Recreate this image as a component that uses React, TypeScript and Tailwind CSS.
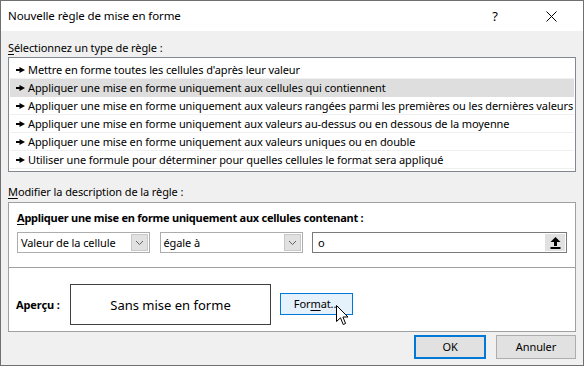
import React from "react";

const Arrow = () => (
  <svg width="9" height="6" viewBox="0 0 9 6" className="shrink-0">
    <rect x="0" y="2" width="5" height="2" fill="#000" />
    <polygon points="3.5,0 9,3 3.5,6" fill="#000" />
  </svg>
);

const Chevron = () => (
  <svg width="9" height="6" viewBox="0 0 9 6">
    <polyline points="1,1 4.5,4.5 8,1" fill="none" stroke="#606060" strokeWidth="1" />
  </svg>
);

const UploadIcon = () => (
  <svg width="11" height="12" viewBox="0 0 11 12">
    <polygon points="5.5,0 10.5,5 0.5,5" fill="#000" />
    <rect x="4" y="4" width="3" height="5" fill="#000" />
    <rect x="0.5" y="10" width="10" height="2" fill="#000" />
  </svg>
);

const Cursor = () => (
  <svg width="13" height="21" viewBox="0 0 13 21">
    <path
      d="M0.5,0.5 L0.5,16.5 L4.5,12.8 L7.2,19.5 L9.6,18.5 L6.9,12 L12,12 Z"
      fill="#fff"
      stroke="#000"
      strokeWidth="1"
      strokeLinejoin="miter"
    />
  </svg>
);

const rules = [
  "Mettre en forme toutes les cellules d'après leur valeur",
  "Appliquer une mise en forme uniquement aux cellules qui contiennent",
  "Appliquer une mise en forme uniquement aux valeurs rangées parmi les premières ou les dernières valeurs",
  "Appliquer une mise en forme uniquement aux valeurs au-dessus ou en dessous de la moyenne",
  "Appliquer une mise en forme uniquement aux valeurs uniques ou en double",
  "Utiliser une formule pour déterminer pour quelles cellules le format sera appliqué",
];

export default function App() {
  return (
    <div className="w-[584px] h-[366px] bg-[#f0f0f0] border border-[#707070] flex flex-col overflow-hidden text-[11px] tracking-[-0.1px] leading-[16px] text-black font-['Noto_Sans',sans-serif]">
      {/* Title bar */}
      <div className="h-[30px] bg-white flex items-center shrink-0">
        <div className="pl-[7px] text-[11.5px] flex-1">Nouvelle règle de mise en forme</div>
        <div className="w-[60px] text-center text-[13px]">?</div>
        <div className="w-[58px] flex justify-center pr-[6px]">
          <svg width="11" height="11" viewBox="0 0 11 11">
            <line x1="0.5" y1="0.5" x2="10.5" y2="10.5" stroke="#000" strokeWidth="1" />
            <line x1="10.5" y1="0.5" x2="0.5" y2="10.5" stroke="#000" strokeWidth="1" />
          </svg>
        </div>
      </div>

      <div className="flex flex-col px-[7px]">
        <div className="mt-[9px] h-[16px]">
          <span className="underline underline-offset-2">S</span>électionnez un type de règle :
        </div>
        <div className="mt-[1px] h-[115px] border border-[#828790] bg-white pt-[3px] px-[1px] flex flex-col">
          {rules.map((r, i) => (
            <div
              key={i}
              className={`h-[18px] flex items-center gap-[3px] pl-[6px] border-b whitespace-nowrap ${
                i === 1 ? "bg-[#dedede] border-[#dedede]" : "border-[#f0f0f0]"
              }`}
            >
              <Arrow />
              <span>{r}</span>
            </div>
          ))}
        </div>

        <div className="mt-[12px] h-[16px]">
          <span className="underline underline-offset-2">M</span>odifier la description de la règle :
        </div>

        <div className="mt-[2px] h-[130px] border border-[#a0a0a0] bg-white flex flex-col">
          <div className="h-[65px] border-b border-[#a0a0a0] px-[8px] pt-[7px] flex flex-col">
            <div className="font-bold h-[16px] tracking-[-0.25px]">
              <span className="underline underline-offset-2">A</span>ppliquer une mise en forme uniquement aux cellules contenant :
            </div>
            <div className="mt-[6px] flex items-center">
              <div className="w-[133px] h-[21px] border border-[#adadad] bg-white flex items-center justify-between pl-[3px] pr-[1px]">
                <span>Valeur de la cellule</span>
                <div className="w-[17px] h-[17px] bg-[#e1e1e1] border border-[#c8c8c8] flex items-center justify-center">
                  <Chevron />
                </div>
              </div>
              <div className="ml-[10px] w-[144px] h-[21px] border border-[#adadad] bg-white flex items-center justify-between pl-[3px] pr-[1px]">
                <span>égale à</span>
                <div className="w-[17px] h-[17px] bg-[#e1e1e1] border border-[#c8c8c8] flex items-center justify-center">
                  <Chevron />
                </div>
              </div>
              <div className="ml-[9px] w-[256px] h-[21px] border border-[#7a7a7a] bg-white flex items-center justify-between pl-[5px] pr-[1px]">
                <span>o</span>
                <div className="w-[20px] h-[17px] bg-[#e1e1e1] flex items-center justify-center">
                  <UploadIcon />
                </div>
              </div>
            </div>
          </div>
          <div className="flex-1 flex items-start pt-[16px] px-[7px]">
            <div className="w-[54px] h-[41px] flex items-center font-bold text-[11px]">Aperçu :</div>
            <div className="w-[201px] h-[41px] border border-[#404040] flex items-center justify-center text-[13px] tracking-normal">
              Sans mise en forme
            </div>
            <div className="relative ml-[9px] mt-[9px] w-[73px] h-[22px] bg-[#e5f1fb] border border-[#0078d7] flex items-center justify-center">
              <span>
                For<span className="underline underline-offset-2">m</span>at...
              </span>
              <div className="absolute left-[55px] top-[11px]">
                <Cursor />
              </div>
            </div>
          </div>
        </div>

        <div className="mt-[3px] flex justify-end gap-[10px]">
          <div className="w-[72px] h-[24px] bg-[#e1e1e1] border-2 border-[#0078d7] flex items-center justify-center">
            OK
          </div>
          <div className="w-[80px] h-[24px] bg-[#e1e1e1] border border-[#adadad] flex items-center justify-center">
            Annuler
          </div>
        </div>
      </div>
    </div>
  );
}
